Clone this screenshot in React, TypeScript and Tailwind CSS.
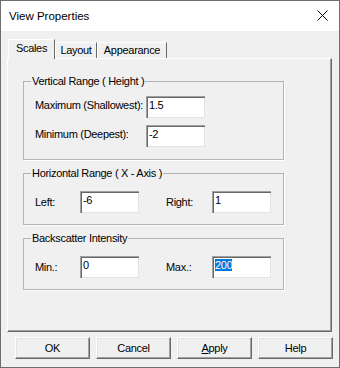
import React from 'react';

const font = { fontFamily: '"Liberation Sans", Arial, sans-serif' };

function Field({ value, selected, className = '' }: { value: string; selected?: boolean; className?: string }) {
  return (
    <div
      className={`h-[22px] w-[59px] bg-white border-t border-l border-[#a0a0a0] border-b-white border-r-white shadow-[inset_1px_1px_0_#696969,inset_-1px_-1px_0_#e3e3e3] pl-[2px] pt-[2px] leading-[13px] ${className}`}
    >
      {selected ? <span className="bg-[#0078d7] text-white">{value}</span> : value}
    </div>
  );
}

function Group({ title, className = '', children }: { title: string; className?: string; children: React.ReactNode }) {
  return (
    <fieldset className={`w-[261px] ml-[15px] border border-[#b4b4b4] shadow-[1px_1px_0_#fff] px-[11px] ${className}`}>
      <legend className="-ml-[4px] px-[1px] leading-[13px]">{title}</legend>
      {children}
    </fieldset>
  );
}

function Btn({ children }: { children: React.ReactNode }) {
  return (
    <div className="w-[75px] h-[22px] border border-t-white border-l-white border-b-[#696969] border-r-[#696969] shadow-[inset_-1px_-1px_0_#a0a0a0,inset_1px_1px_0_#e3e3e3] flex items-center justify-center leading-[13px]">
      {children}
    </div>
  );
}

export default function App() {
  const tabs = [
    { label: 'Layout', w: 'w-[42px]' },
    { label: 'Appearance', w: 'w-[70px]' },
  ];

  return (
    <div
      className="w-[340px] h-[368px] border border-[#6e6e6e] bg-[#f0f0f0] text-black text-[11px] tracking-[-0.3px] flex flex-col"
      style={font}
    >
      {/* title bar */}
      <div className="h-[30px] bg-white flex items-center justify-between pl-[8px] pr-[11px]">
        <span className="text-[11.5px] tracking-[0px] pt-[1px]">View Properties</span>
        <svg width="11" height="11" viewBox="0 0 11 11" className="mt-[-1px]">
          <path d="M0.5 0.5 L10.5 10.5 M10.5 0.5 L0.5 10.5" stroke="#000" strokeWidth="1" />
        </svg>
      </div>

      <div className="px-[6px] pt-[8px] flex flex-col">
        {/* tabs */}
        <div className="flex items-end h-[19px] pl-[1px]">
          <div className="relative z-10 w-[47px] h-[20px] -mb-[1px] bg-[#f0f0f0] border-t border-l border-white border-r border-r-[#696969] flex justify-center pt-[2px] leading-[13px]">
            Scales
          </div>
          {tabs.map((t) => (
            <div
              key={t.label}
              className={`${t.w} h-[16px] bg-[#f0f0f0] border-t border-l border-white border-r border-r-[#696969] flex items-center justify-center leading-[13px]`}
            >
              {t.label}
            </div>
          ))}
        </div>

        {/* panel */}
        <div className="w-[325px] h-[274px] border border-t-white border-l-white border-b-[#696969] border-r-[#696969] shadow-[inset_-1px_-1px_0_#a0a0a0] flex flex-col">
          <Group title="Vertical Range ( Height )" className="mt-[16px] pb-[12px]">
            <div className="flex items-start mt-[8px]">
              <span className="w-[111px] pt-[3px] leading-[13px]">Maximum (Shallowest):</span>
              <Field value="1.5" />
            </div>
            <div className="flex items-start mt-[7px]">
              <span className="w-[111px] pt-[3px] leading-[13px]">Minimum (Deepest):</span>
              <Field value="-2" />
            </div>
          </Group>

          <Group title="Horizontal Range ( X - Axis )" className="mt-[7px] pb-[11px]">
            <div className="flex items-start mt-[11px]">
              <span className="w-[45px] pt-[5px] leading-[13px]">Left:</span>
              <Field value="-6" />
              <span className="w-[46px] ml-[27px] pt-[5px] leading-[13px]">Right:</span>
              <Field value="1" />
            </div>
          </Group>

          <Group title="Backscatter Intensity" className="mt-[7px] pb-[11px]">
            <div className="flex items-start mt-[11px]">
              <span className="w-[45px] pt-[5px] leading-[13px]">Min.:</span>
              <Field value="0" />
              <span className="w-[46px] ml-[27px] pt-[5px] leading-[13px]">Max.:</span>
              <Field value="200" selected />
            </div>
          </Group>
        </div>

        {/* buttons */}
        <div className="flex gap-[6px] mt-[5px] pl-[8px]">
          <Btn>OK</Btn>
          <Btn>Cancel</Btn>
          <Btn>
            <span>
              <span className="underline underline-offset-1">A</span>pply
            </span>
          </Btn>
          <Btn>Help</Btn>
        </div>
      </div>
    </div>
  );
}
